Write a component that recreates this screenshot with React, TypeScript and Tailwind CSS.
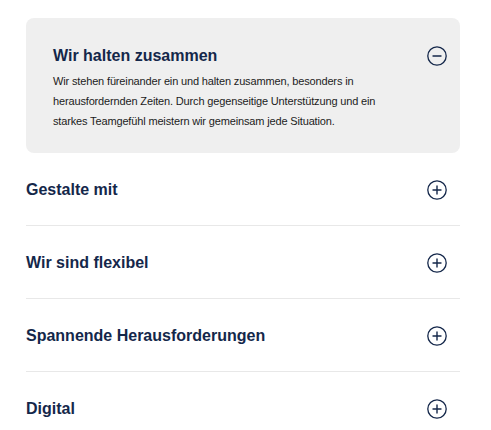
import { useState } from "react";

type Item = {
  title: string;
  text?: string;
};

const items: Item[] = [
  {
    title: "Wir halten zusammen",
    text: "Wir stehen füreinander ein und halten zusammen, besonders in herausfordernden Zeiten. Durch gegenseitige Unterstützung und ein starkes Teamgefühl meistern wir gemeinsam jede Situation.",
  },
  { title: "Gestalte mit", text: "" },
  { title: "Wir sind flexibel", text: "" },
  { title: "Spannende Herausforderungen", text: "" },
  { title: "Digital", text: "" },
];

function ToggleIcon({ open }: { open: boolean }) {
  return (
    <svg width="20" height="20" viewBox="0 0 20 20" fill="none" className="shrink-0">
      <circle cx="10" cy="10" r="9.2" stroke="#14274a" strokeWidth="1.3" />
      <path d="M6 10h8" stroke="#14274a" strokeWidth="1.4" strokeLinecap="round" />
      {!open && <path d="M10 6v8" stroke="#14274a" strokeWidth="1.4" strokeLinecap="round" />}
    </svg>
  );
}

export default function App() {
  const [openIndex, setOpenIndex] = useState(0);

  return (
    <main
      className="min-h-screen bg-white pt-[18px]"
      style={{ fontFamily: '"Liberation Sans", Arial, sans-serif' }}
    >
      <div className="ml-[26px] w-[434px]">
        {items.map((item, i) => {
          const open = openIndex === i;

          if (open) {
            return (
              <section
                key={item.title}
                className="rounded-lg bg-[#efefef] pb-[22px] pl-[27px] pr-[13px] pt-[26px]"
              >
                <button
                  type="button"
                  onClick={() => setOpenIndex(-1)}
                  className="flex w-full items-center justify-between text-left"
                >
                  <span className="text-[16px] font-bold leading-6 text-[#14274a]">
                    {item.title}
                  </span>
                  <ToggleIcon open />
                </button>
                <p className="mt-[3px] w-[345px] text-[11px] leading-5 tracking-[-0.15px] text-[#1c1c1c]">
                  {item.text}
                </p>
              </section>
            );
          }

          return (
            <div
              key={item.title}
              className={i < items.length - 1 ? "border-b border-[#e8e8e8]" : ""}
            >
              <button
                type="button"
                onClick={() => setOpenIndex(i)}
                className="flex w-full items-center justify-between pb-[23px] pr-[13px] pt-[25px] text-left"
              >
                <span className="text-[16px] font-bold leading-6 text-[#14274a]">
                  {item.title}
                </span>
                <ToggleIcon open={false} />
              </button>
            </div>
          );
        })}
      </div>
    </main>
  );
}
